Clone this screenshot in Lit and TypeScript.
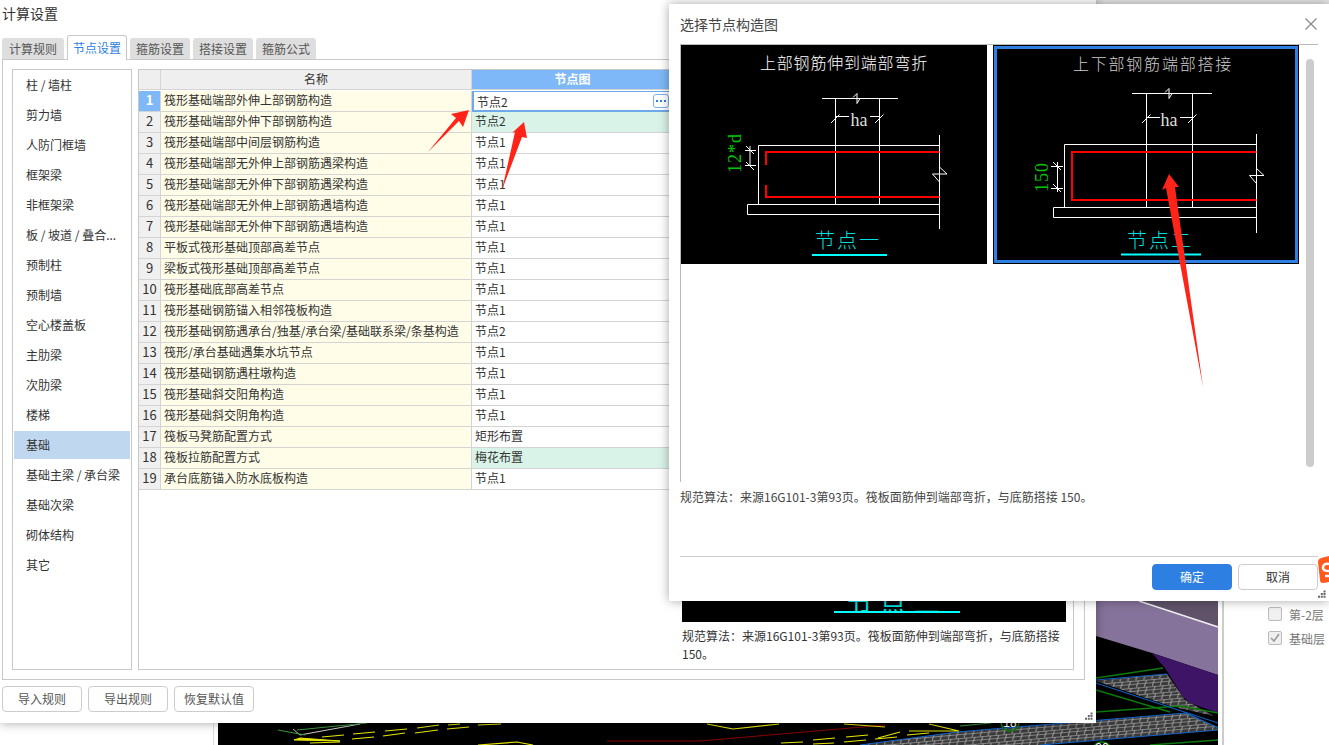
import { LitElement, html, css, svg } from "lit";
import { customElement } from "lit/decorators.js";

const TABS = ["计算规则", "节点设置", "箍筋设置", "搭接设置", "箍筋公式"];

const SIDEBAR = [
  "柱 / 墙柱",
  "剪力墙",
  "人防门框墙",
  "框架梁",
  "非框架梁",
  "板 / 坡道 / 叠合...",
  "预制柱",
  "预制墙",
  "空心楼盖板",
  "主肋梁",
  "次肋梁",
  "楼梯",
  "基础",
  "基础主梁 / 承台梁",
  "基础次梁",
  "砌体结构",
  "其它",
];

// name, value, changed from default
const ROWS: [string, string, boolean][] = [
  ["筏形基础端部外伸上部钢筋构造", "节点2", false],
  ["筏形基础端部外伸下部钢筋构造", "节点2", true],
  ["筏形基础端部中间层钢筋构造", "节点1", false],
  ["筏形基础端部无外伸上部钢筋遇梁构造", "节点1", false],
  ["筏形基础端部无外伸下部钢筋遇梁构造", "节点1", false],
  ["筏形基础端部无外伸上部钢筋遇墙构造", "节点1", false],
  ["筏形基础端部无外伸下部钢筋遇墙构造", "节点1", false],
  ["平板式筏形基础顶部高差节点", "节点1", false],
  ["梁板式筏形基础顶部高差节点", "节点1", false],
  ["筏形基础底部高差节点", "节点1", false],
  ["筏形基础钢筋锚入相邻筏板构造", "节点1", false],
  ["筏形基础钢筋遇承台/独基/承台梁/基础联系梁/条基构造", "节点2", false],
  ["筏形/承台基础遇集水坑节点", "节点1", false],
  ["筏形基础钢筋遇柱墩构造", "节点1", false],
  ["筏形基础斜交阳角构造", "节点1", false],
  ["筏形基础斜交阴角构造", "节点1", false],
  ["筏板马凳筋配置方式", "矩形布置", false],
  ["筏板拉筋配置方式", "梅花布置", true],
  ["承台底筋锚入防水底板构造", "节点1", false],
];

const DESC = "规范算法：来源16G101-3第93页。筏板面筋伸到端部弯折，与底筋搭接 150。";

const YELLOW = [
  "322,737 344,735",
  "353,734 375,732",
  "385,731 407,729",
  "417,728 439,725",
  "448,725 460,724",
  "478,725 501,724",
  "352,739 374,737",
  "383,736 405,733",
  "415,733 438,730",
  "447,729 469,727",
  "310,743 340,742",
  "478,745 517,742 533,745",
  "707,724 733,729 779,724",
  "844,724 885,727",
  "929,724 959,731 909,731",
  "878,738 900,732",
  "846,737 868,735",
  "813,740 835,738",
  "781,743 803,742",
  "844,742 866,740",
  "875,739 897,737",
  "907,735 929,733",
  "813,744 834,743",
];

const MESH_1 = "1096,681 1167,674 1185,700 1214,716 1170,706";
const MESH_2 = "860,745 957,732 1186,713 1218,727 1218,730 1040,745";

const cadDrawing = () => svg`
  <defs>
    <pattern id="mesh" width="16" height="7" patternUnits="userSpaceOnUse" patternTransform="rotate(-5)">
      <rect width="16" height="7" fill="#3a3a3a"></rect>
      <path d="M0 .5H16M0 3.5H16" stroke="#808080" stroke-width="1"></path>
      <path d="M3 0L0 7M11 0L8 7" stroke="#a8a8a8" stroke-width="1"></path>
    </pattern>
  </defs>
  <rect x="218" y="590" width="1000" height="155" fill="#000"></rect>
  <polygon points="1096,590 1218,590 1218,675 1152,653 1096,636" fill="#86739b"></polygon>
  <polygon points="1130,590 1218,590 1218,626 1139,601" fill="#5f5269"></polygon>
  <path d="M1139 601L1218 627" stroke="#eee" stroke-width="1.5"></path>
  <polygon points="1152,653 1218,675 1218,713 1190,703 1183,697 1165,668" fill="#3d1466"></polygon>
  <polygon points=${MESH_1} fill="url(#mesh)"></polygon>
  <polygon points=${MESH_2} fill="url(#mesh)"></polygon>
  <path d="M1096 678L1163 668M1096 712L1180 706L1218 713M1096 690L1170 712M1150 745L1218 740" stroke="#0a7a0a" stroke-width="1.5" fill="none"></path>
  <path d="M1096 680L1167 674M1096 683L1218 723M957 732L1186 713L1218 728M860 745L957 732M1040 745L1218 730" stroke="#0f5fc0" stroke-width="1.2" fill="none"></path>
  <path d="M607 741H700L885 725" stroke="#8a0000" fill="none"></path>
  ${YELLOW.map(
    (p) => svg`<polyline points=${p} fill="none" stroke="#e6e600" stroke-width="1.2"></polyline>`,
  )}
  <path d="M293 729L300 735L360 724" stroke="#ccc" fill="none"></path>
  <path d="M297 730L367 723M278 730L305 735M960 726L991 723" stroke="#3f9a3f" fill="none"></path>
  <path d="M294 740L340 741L300 738Z" fill="#e6e600" stroke="#e6e600"></path>
  <g fill="none" stroke="#0a7a0a" stroke-width="1.5">
    <circle cx="1010" cy="722" r="9"></circle>
    <circle cx="1102" cy="752" r="10"></circle>
  </g>
  <text class="node-no" x="1010" y="727" text-anchor="middle">18</text>
  <text class="node-no" x="1102" y="752" text-anchor="middle">20</text>
`;

const breakMark = (x: number, y: number) => svg`
  <path class="ln" d="M${x - 7} ${y}H${x + 7.5}M${x} ${y - 7}L${x + 7.5} ${y}M${x - 7} ${y}L${x} ${y + 8}"></path>
`;

const topBreak = (x: number, y: number) => svg`
  <path class="ln" d="M${x - 3} ${y - 1}L${x + 1} ${y - 5}L${x + 1} ${y + 5}L${x + 4} ${y}"></path>
`;

// x positions of the shared detail drawing differ a little between the two pictures
const detailOne = svg`
  <svg class="cad" viewBox="0 0 306 219">
    <text class="head" x="163" y="24" text-anchor="middle">上部钢筋伸到端部弯折</text>
    <path class="ln" d="M141 53.5H217M154.5 53.5V159.5M198.5 53.5V159.5"></path>
    ${topBreak(175, 53.5)}
    <path class="ln" d="M150 78L158.5 69.5M194 78L202.5 69.5M154.5 71.5H168M189 71.5H198.5"></path>
    <text class="ha" x="178" y="81" text-anchor="middle">ha</text>
    <path class="ln" d="M258.5 100.5H77.5V159.5M66.5 159.5H258.5M66.5 159.5V169.5H258.5M258.5 90V184"></path>
    ${breakMark(258.5, 129)}
    <path class="rb" d="M258.5 107H85V120M85 140V152H258.5"></path>
    <path class="ln" d="M64 105.5H75M64 120.5H75M69 101V121M65 101L73 109M65 117L73 125"></path>
    <text class="dim" transform="translate(60 108) rotate(-90)" text-anchor="middle">12*d</text>
    <text class="foot" x="167" y="203" text-anchor="middle">节点一</text>
    <path class="ul" d="M131 210H206"></path>
  </svg>
`;

const detailTwo = svg`
  <svg class="cad" viewBox="0 0 306 219">
    <text class="head alt" x="160" y="25" text-anchor="middle">上下部钢筋端部搭接</text>
    <path class="ln" d="M139 48.5H219M153.5 48.5V162.5M199.5 48.5V162.5"></path>
    ${topBreak(175, 48.5)}
    <path class="ln" d="M149 78L157.5 69.5M195 78L203.5 69.5M153.5 72.5H167M187 72.5H199.5"></path>
    <text class="ha" x="176" y="81" text-anchor="middle">ha</text>
    <path class="ln" d="M263.5 99.5H71.5V162.5M60.5 162.5H263.5M60.5 162.5V172.5H263.5M263.5 89V188"></path>
    ${breakMark(263.5, 130.5)}
    <path class="rb" d="M263.5 107H79V155H263.5"></path>
    <path class="ln" d="M58 121.5H70M58 143.5H70M64.5 117V147M60 117L68 125M60 139L68 147"></path>
    <text class="dim" transform="translate(55 132) rotate(-90)" text-anchor="middle">150</text>
    <text class="foot" x="167" y="203" text-anchor="middle">节点二</text>
    <path class="ul" d="M128 209.5H208"></path>
  </svg>
`;

const grip = () => html`
  <svg class="grip" width="8" height="8" viewBox="0 0 8 8">
    <path d="M5.5 .5h2v2h-2zM2.8 3h2v2h-2zM5.5 3h2v2h-2zM0 5.8h2v2h-2zM2.8 5.8h2v2h-2zM5.5 5.8h2v2h-2z" fill="#666"></path>
  </svg>
`;

@customElement("app-root")
export class AppRoot extends LitElement {
  static styles = css`
    :host {
      display: block;
      position: relative;
      width: 1329px;
      height: 745px;
      overflow: hidden;
      background: #fff;
      color: #333;
      font: 12px "Noto Sans CJK SC", "Liberation Sans", sans-serif;
    }

    * {
      box-sizing: border-box;
    }

    .top-strip {
      height: 4px;
      background: #e6e6e6;
    }

    .backdrop {
      position: absolute;
      inset: 0;
    }

    .divider {
      position: absolute;
      left: 213px;
      top: 600px;
      width: 1px;
      height: 145px;
      background: #ddd;
    }

    .side-line {
      position: absolute;
      left: 1222px;
      top: 590px;
      width: 2px;
      height: 155px;
      background: #ccc;
    }

    .floors {
      position: absolute;
      left: 1268px;
      top: 603px;
      display: flex;
      flex-direction: column;
      gap: 2px;
      color: #777;
    }

    .floor {
      display: flex;
      align-items: center;
      gap: 7px;
      height: 22px;
      white-space: nowrap;
    }

    .check {
      width: 14px;
      height: 14px;
      border: 1px solid #bbb;
      border-radius: 2px;
      background: #f0f0f0;
      display: flex;
    }

    .sogou {
      position: absolute;
      left: 1318px;
      top: 556px;
    }

    .win {
      position: absolute;
      background: #fff;
      display: flex;
      flex-direction: column;
      box-shadow: 0 0 10px rgba(0, 0, 0, 0.35);
    }

    .grip {
      position: absolute;
      right: 3px;
      bottom: 3px;
    }

    /* settings window */
    .main {
      left: 0;
      top: 0;
      width: 1096px;
      height: 723px;
    }

    .main-title {
      height: 35px;
      padding: 4px 2px 0;
      font-size: 14px;
      line-height: 18px;
    }

    .tabs {
      display: flex;
      align-items: flex-end;
      height: 25px;
      padding-left: 2px;
      gap: 3px;
      position: relative;
      z-index: 1;
    }

    .tab {
      width: 60px;
      height: 21px;
      margin-bottom: 1px;
      padding-bottom: 1px;
      background: #dedede;
      border-radius: 3px 3px 0 0;
      color: #555;
      display: flex;
      align-items: center;
      justify-content: center;
    }

    .tab:first-child {
      width: 62px;
    }

    .tab.on {
      height: 25px;
      margin-bottom: 0;
      background: #fff;
      border: 1px solid #c8c8c8;
      border-bottom: 0;
      color: #2e7fe2;
    }

    .panel {
      margin: -1px 11px 0 2px;
      height: 621px;
      border: 1px solid #c8c8c8;
      padding: 9px;
      display: flex;
    }

    .sidebar {
      width: 120px;
      margin-right: 6px;
      border: 1px solid #c8c8c8;
      padding: 1px 1px 0;
      display: flex;
      flex-direction: column;
      gap: 2px;
      flex: none;
    }

    .side-item {
      height: 28px;
      line-height: 28px;
      padding-left: 12px;
      white-space: nowrap;
      flex: none;
    }

    .side-item.on {
      background: #bfd8f0;
    }

    .grid {
      width: 536px;
      flex: none;
      border: 1px solid #c8c8c8;
      border-right: 0;
      display: grid;
      grid-template-columns: 22px 311px 1fr;
      grid-auto-rows: 21px;
      align-content: start;
    }

    .cell {
      border-right: 1px solid #d4d4d4;
      border-bottom: 1px solid #d4d4d4;
      padding-left: 3px;
      line-height: 17px;
      white-space: nowrap;
      overflow: hidden;
    }

    .hd {
      height: 20px;
      background: #efefef;
      text-align: center;
      padding: 0;
      line-height: 18px;
    }

    .hd.on {
      background: #7fb8f8;
      color: #fff;
      font-weight: 700;
      padding-left: 0;
    }

    .idx {
      background: #f0f0f0;
      padding: 0;
      text-align: center;
      font-size: 13px;
    }

    .idx.on {
      background: #7fb8f8;
      color: #fff;
      font-weight: 700;
    }

    .name {
      background: #fffde8;
    }

    .val.changed {
      background: #daf3e9;
    }

    .val.edit {
      border: 2px solid #6ea9ea;
      border-top-width: 1px;
      padding-left: 3px;
      line-height: 17px;
      display: flex;
      align-items: center;
      justify-content: space-between;
    }

    .more {
      width: 16px;
      height: 14px;
      margin-right: 3px;
      border: 1px solid #7fb0ea;
      border-radius: 3px;
      display: flex;
      align-items: center;
      justify-content: center;
      gap: 2px;
      margin-left: auto;
    }

    .more i {
      width: 2px;
      height: 2px;
      background: #2e7fe2;
    }

    .preview {
      width: 400px;
      flex: none;
      border: 1px solid #c8c8c8;
      border-left: 0;
      padding: 0 7px 0 8px;
      display: flex;
      flex-direction: column;
    }

    .preview-img {
      flex: 1;
      background: #000;
      display: flex;
      flex-direction: column;
      align-items: center;
      justify-content: flex-end;
      padding: 0 0 9px 0;
    }

    .preview-foot {
      width: 126px;
      height: 24px;
      margin-left: 46px;
      border-bottom: 2px solid #00ffff;
      color: #00e0e0;
      font-size: 26px;
      line-height: 26px;
      letter-spacing: 8px;
      text-align: center;
      overflow: hidden;
    }

    .preview-text {
      height: 47px;
      padding-top: 5px;
      line-height: 18px;
    }

    .actions {
      display: flex;
      gap: 6px;
      padding: 6px 2px 0;
    }

    .btn {
      width: 80px;
      height: 26px;
      padding-bottom: 1px;
      border: 1px solid #ccc;
      border-radius: 4px;
      background: #fff;
      color: #555;
      display: flex;
      align-items: center;
      justify-content: center;
    }

    /* node picker window, runs off the right edge of the screen */
    .picker {
      left: 669px;
      top: 4px;
      width: 660px;
      height: 597px;
      padding: 0 11px;
    }

    .picker-head {
      height: 40px;
      display: flex;
      align-items: center;
      justify-content: space-between;
      font-size: 14px;
      color: #444;
    }

    .gallery {
      height: 438px;
      border-top: 1px solid #bbb;
      border-left: 1px solid #bbb;
      display: flex;
    }

    .shots {
      display: flex;
      gap: 6px;
      align-items: flex-start;
      width: 618px;
    }

    .shot {
      width: 306px;
      height: 219px;
      background: #000;
      flex: none;
    }

    .shot.on {
      outline: 3px solid #2e7fe2;
      outline-offset: -4px;
      box-shadow: inset 0 0 0 1px #000;
    }

    .cad {
      display: block;
      width: 306px;
      height: 219px;
      font-family: "Noto Sans CJK SC", sans-serif;
    }

    .cad .ln {
      stroke: #fff;
      fill: none;
      stroke-width: 1;
    }

    .cad .rb {
      stroke: #f00;
      fill: none;
      stroke-width: 2;
    }

    .cad .ul {
      stroke: #00ffff;
      fill: none;
      stroke-width: 2;
    }

    .cad .head {
      fill: #fff;
      font-size: 16px;
      font-weight: 300;
      letter-spacing: 0.8px;
    }

    .cad .head.alt {
      fill: #ccc;
      letter-spacing: 1.8px;
    }

    .cad .ha {
      fill: #ddd;
      font: 18px "Liberation Serif", serif;
    }

    .cad .dim {
      fill: #00c800;
      font: 18px "Liberation Serif", serif;
      letter-spacing: 1px;
    }

    .cad .foot {
      fill: #00dede;
      font-size: 20px;
      font-weight: 300;
      letter-spacing: 2px;
    }

    .thumb {
      width: 8px;
      height: 408px;
      margin: 14px 0 0 7px;
      border-radius: 4px;
      background: #ccc;
    }

    .picker-text {
      height: 75px;
      padding-top: 6px;
      line-height: 18px;
      color: #444;
      border-bottom: 1px solid #ccc;
    }

    .picker-actions {
      display: flex;
      justify-content: flex-end;
      gap: 6px;
      padding-top: 7px;
    }

    .btn.primary {
      background: #2e7fe2;
      border-color: #2e7fe2;
      color: #fff;
    }

    .btn.plain {
      color: #333;
    }

    .arrows {
      position: absolute;
      inset: 0;
      pointer-events: none;
    }

    .node-no {
      fill: #fff;
      font: 12px "Liberation Sans", sans-serif;
    }
  `;

  render() {
    return html`
      <div class="top-strip"></div>
      <svg class="backdrop" width="1329" height="745" viewBox="0 0 1329 745">${cadDrawing()}</svg>
      <div class="divider"></div>
      <div class="side-line"></div>
      <div class="floors">
        <div class="floor"><span class="check"></span>第-2层</div>
        <div class="floor">
          <span class="check">
            <svg width="12" height="12" viewBox="0 0 12 12"><path d="M2 6l3 3 5-7" fill="none" stroke="#999" stroke-width="1.5"></path></svg>
          </span>基础层
        </div>
      </div>

      <section class="win main">
        <div class="main-title">计算设置</div>
        <div class="tabs">
          ${TABS.map((t, i) => html`<div class="tab ${i === 1 ? "on" : ""}">${t}</div>`)}
        </div>
        <div class="panel">
          <nav class="sidebar">
            ${SIDEBAR.map((s) => html`<div class="side-item ${s === "基础" ? "on" : ""}">${s}</div>`)}
          </nav>
          <div class="grid">
            <div class="cell hd"></div>
            <div class="cell hd">名称</div>
            <div class="cell hd on">节点图</div>
            ${ROWS.map(
              ([name, value, changed], i) => html`
                <div class="cell idx ${i === 0 ? "on" : ""}">${i + 1}</div>
                <div class="cell name">${name}</div>
                ${i === 0
                  ? html`<div class="cell val edit">
                      ${value}
                      <span class="more"><i></i><i></i><i></i></span>
                    </div>`
                  : html`<div class="cell val ${changed ? "changed" : ""}">${value}</div>`}
              `,
            )}
          </div>
          <div class="preview">
            <div class="preview-img"><div class="preview-foot">节点二</div></div>
            <div class="preview-text">${DESC}</div>
          </div>
        </div>
        <div class="actions">
          <div class="btn">导入规则</div>
          <div class="btn">导出规则</div>
          <div class="btn">恢复默认值</div>
        </div>
        ${grip()}
      </section>

      <section class="win picker">
        <div class="picker-head">
          <span>选择节点构造图</span>
          <svg width="14" height="14" viewBox="0 0 14 14">
            <path d="M1.5 1.5L12.5 12.5M12.5 1.5L1.5 12.5" stroke="#888" stroke-width="1.2" fill="none"></path>
          </svg>
        </div>
        <div class="gallery">
          <div class="shots">
            <div class="shot">${detailOne}</div>
            <div class="shot on">${detailTwo}</div>
          </div>
          <div class="thumb"></div>
        </div>
        <div class="picker-text">${DESC}</div>
        <div class="picker-actions">
          <div class="btn primary">确定</div>
          <div class="btn plain">取消</div>
        </div>
        ${grip()}
      </section>

      <svg class="sogou" width="11" height="28" viewBox="0 0 11 28">
        <path d="M3 2L11 0V26L5 27Q2 27 2 24L0 6Q0 3 3 2Z" fill="#ff5a1f"></path>
        <path d="M11 8Q5 7 5 12Q5 15 11 15M11 20H7" fill="none" stroke="#fff" stroke-width="2.5"></path>
      </svg>

      <svg class="arrows" width="1329" height="745" viewBox="0 0 1329 745">
        <polygon points="428,152 456,118 451,114 469,110 463,127 459,121" fill="#ff2318"></polygon>
        <polygon points="502,190 515,132 512,133 524,122 527,138 522,137" fill="#ff2318"></polygon>
        <polygon points="1203,387 1166,188 1162,190 1169,174 1179,187 1175,187" fill="#ff2318"></polygon>
      </svg>
    `;
  }
}
